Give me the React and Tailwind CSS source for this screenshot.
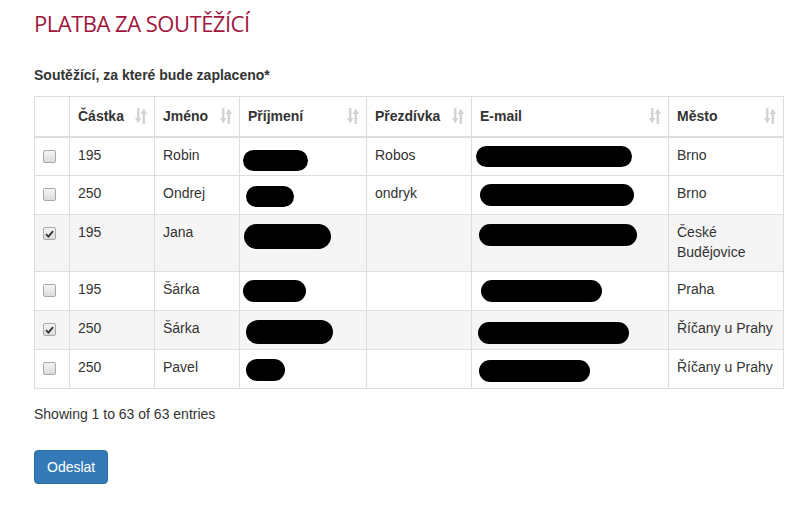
import { useState } from "react";

const cols = [
  { label: "", w: 35 },
  { label: "Částka", w: 85 },
  { label: "Jméno", w: 85 },
  { label: "Příjmení", w: 127 },
  { label: "Přezdívka", w: 105 },
  { label: "E-mail", w: 197 },
  { label: "Město", w: 115 },
];

// redaction blobs: [left, top, width, height] relative to the cell
const rows = [
  { amount: "195", name: "Robin", nick: "Robos", city: "Brno", checked: false, h: 39, sur: [3, 12, 65, 21], mail: [4, 8, 156, 21] },
  { amount: "250", name: "Ondrej", nick: "ondryk", city: "Brno", checked: false, h: 39, sur: [6, 10, 48, 21], mail: [8, 8, 154, 22] },
  { amount: "195", name: "Jana", nick: "", city: "České Budějovice", checked: true, h: 57, sur: [4, 9, 87, 25], mail: [7, 9, 158, 22] },
  { amount: "195", name: "Šárka", nick: "", city: "Praha", checked: false, h: 39, sur: [3, 8, 63, 22], mail: [9, 8, 121, 22] },
  { amount: "250", name: "Šárka", nick: "", city: "Říčany u Prahy", checked: true, h: 39, sur: [6, 9, 87, 24], mail: [6, 11, 151, 22] },
  { amount: "250", name: "Pavel", nick: "", city: "Říčany u Prahy", checked: false, h: 39, sur: [6, 9, 39, 22], mail: [7, 10, 111, 22] },
];

function SortIcon() {
  return (
    <svg width="12" height="16" viewBox="0 0 12 16" className="absolute right-[7px] top-[11px]">
      <g fill="#d2d2d2">
        <rect x="2" y="0" width="2.4" height="11" />
        <polygon points="0,10 6.4,10 3.2,15.5" />
        <rect x="7.6" y="5" width="2.4" height="11" />
        <polygon points="5.6,6 12,6 8.8,0.5" />
      </g>
    </svg>
  );
}

function Box({ checked, onClick }) {
  return (
    <span
      onClick={onClick}
      className="mt-[5px] inline-flex h-[13px] w-[13px] items-center justify-center rounded-[2px] border border-[#a9a9a9] bg-gradient-to-b from-[#f4f4f4] to-[#dcdcdc]"
    >
      {checked && (
        <svg width="9" height="8" viewBox="0 0 9 8">
          <path d="M1 4.2 L3.4 6.6 L8 1.2" stroke="#333" strokeWidth="1.8" fill="none" />
        </svg>
      )}
    </span>
  );
}

function Blob({ b }) {
  return (
    <span
      className="absolute rounded-full bg-black"
      style={{ left: b[0], top: b[1], width: b[2], height: b[3] }}
    />
  );
}

export default function App() {
  const [checks, setChecks] = useState(rows.map((r) => r.checked));

  const toggle = (i) => {
    const next = [...checks];
    next[i] = !next[i];
    setChecks(next);
  };

  return (
    <div className="min-h-[511px] bg-white pl-[34px] pt-[8px] text-[14px] leading-[20px] text-[#333] font-['Liberation_Sans',Arial,sans-serif]">
      <h1 className="font-['Open_Sans',sans-serif] text-[22px] leading-[30px] tracking-[-0.5px] text-[#a0153e]">
        PLATBA ZA SOUTĚŽÍCÍ
      </h1>

      <div className="mt-[27px] font-bold">Soutěžící, za které bude zaplaceno*</div>

      <table className="mt-[11px] table-fixed border-collapse" style={{ width: 749 }}>
        <thead>
          <tr className="h-[40px]">
            {cols.map((c, i) => (
              <th
                key={i}
                style={{ width: c.w }}
                className="relative border border-b-2 border-[#ddd] px-2 text-left align-middle font-bold"
              >
                {c.label}
                {c.label && <SortIcon />}
              </th>
            ))}
          </tr>
        </thead>
        <tbody>
          {rows.map((r, i) => (
            <tr key={i} className={checks[i] ? "bg-[#f5f5f5]" : "bg-white"} style={{ height: r.h }}>
              <td className="border border-[#ddd] px-2 pt-[7px] align-top">
                <Box checked={checks[i]} onClick={() => toggle(i)} />
              </td>
              <td className="border border-[#ddd] px-2 pt-[7px] align-top">{r.amount}</td>
              <td className="border border-[#ddd] px-2 pt-[7px] align-top">{r.name}</td>
              <td className="relative border border-[#ddd] px-2 align-top">
                <Blob b={r.sur} />
              </td>
              <td className="border border-[#ddd] px-2 pt-[7px] align-top">{r.nick}</td>
              <td className="relative border border-[#ddd] px-2 align-top">
                <Blob b={r.mail} />
              </td>
              <td className="border border-[#ddd] px-2 pt-[7px] align-top">{r.city}</td>
            </tr>
          ))}
        </tbody>
      </table>

      <div className="mt-[15px]">Showing 1 to 63 of 63 entries</div>

      <button className="mt-[26px] h-[34px] rounded-[4px] border border-[#2e6da4] bg-[#337ab7] px-3 text-[14px] text-white">
        Odeslat
      </button>
    </div>
  );
}
